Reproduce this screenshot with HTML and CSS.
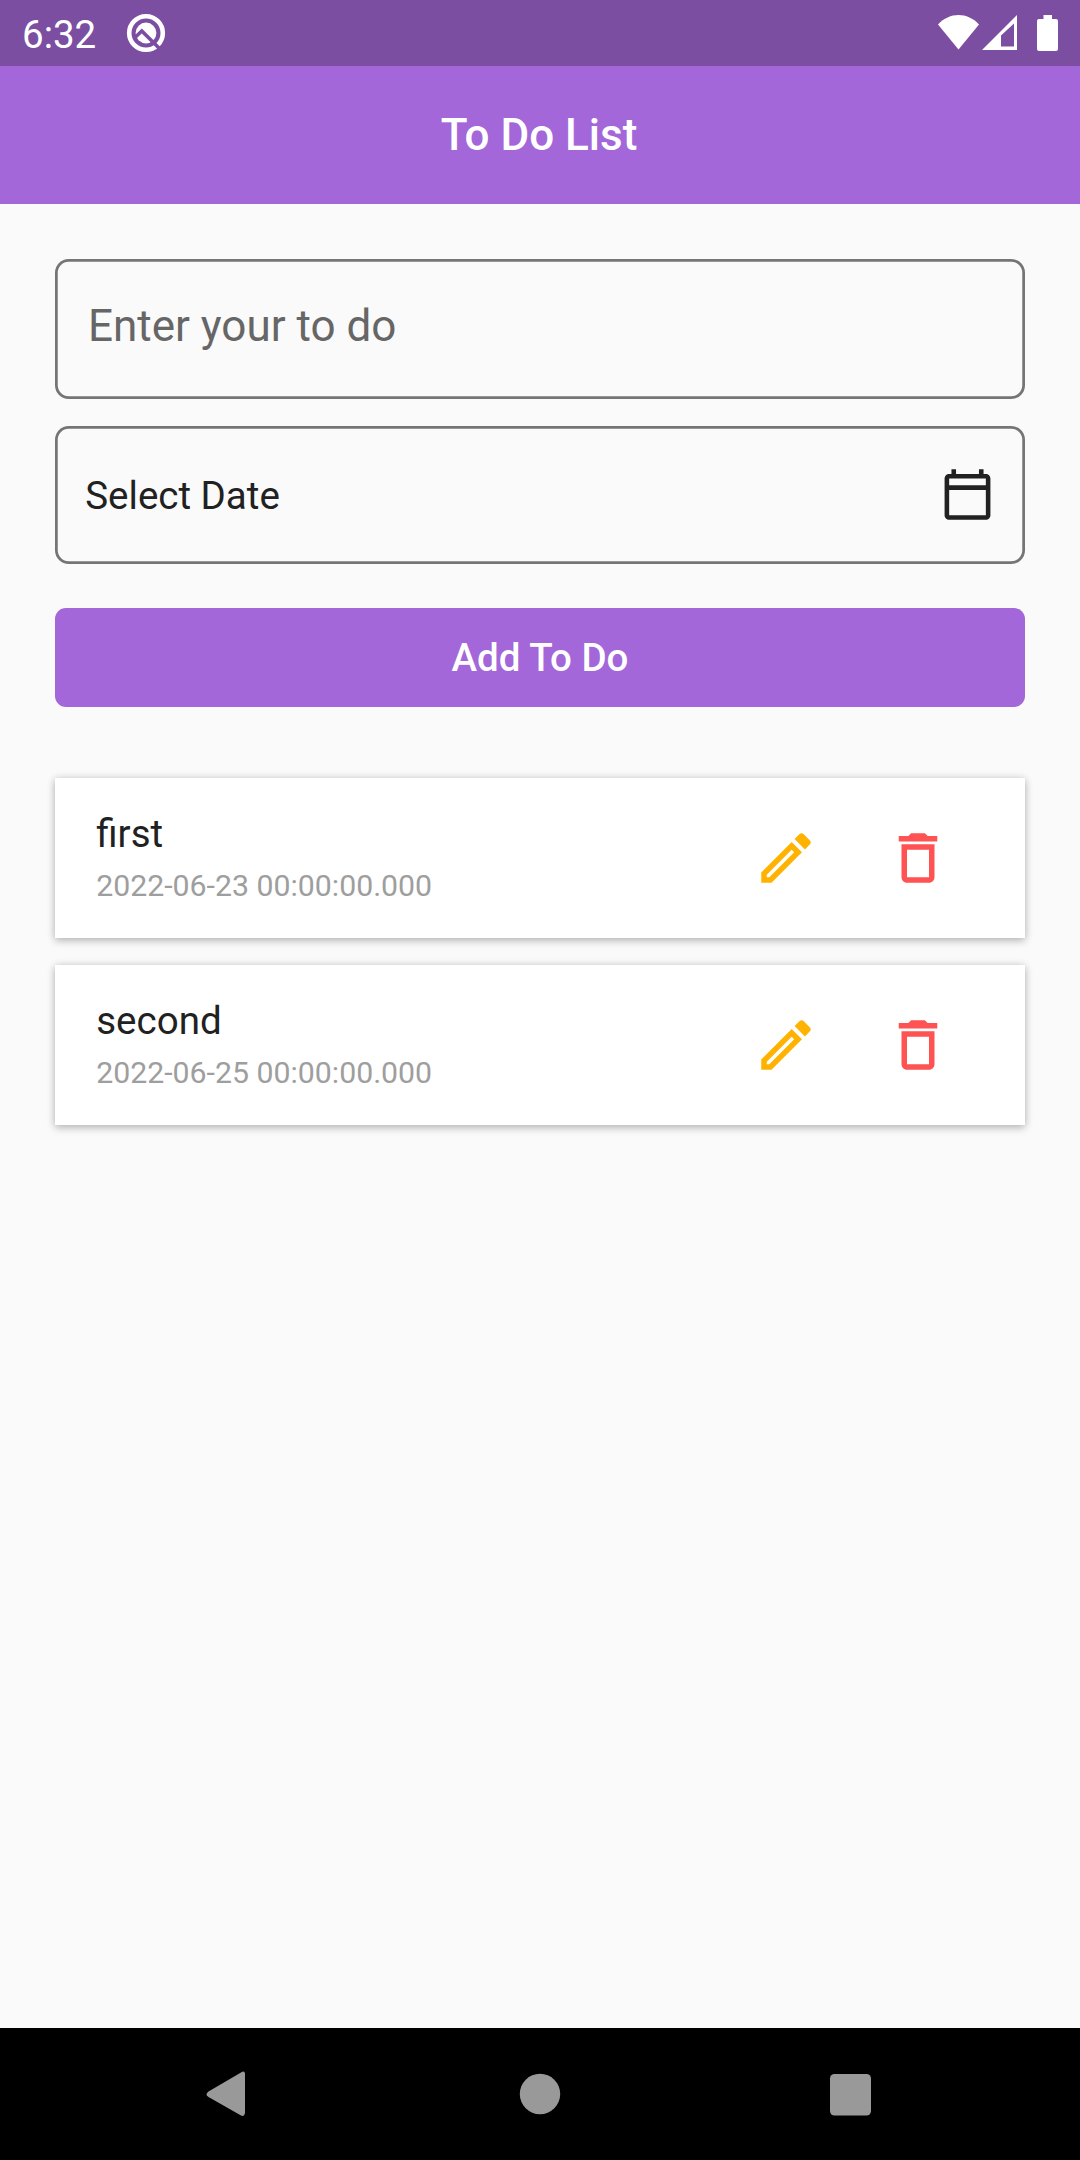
FILE: index.html
```html
<!DOCTYPE html>
<html lang="en">
<head>
<meta charset="utf-8">
<title>To Do List</title>
<link rel="stylesheet" href="styles.css">
</head>
<body>
<div class="screen">
  <header class="status-bar">
    <span class="clock">6:32</span>
    <svg class="badge-icon" width="40" height="40" viewBox="0 0 40 40">
      <circle cx="20" cy="20" r="16.8" fill="none" stroke="#fff" stroke-width="4.6"/>
      <circle cx="20" cy="20" r="10.4" fill="#fff"/>
      <path d="M9 24.5 15.8 18 35.5 37.5" fill="none" stroke="#7c4ea2" stroke-width="3.6"/>
    </svg>
    <svg class="system-icons" width="122" height="40" viewBox="0 0 122 40">
      <path d="M0 10.5C11.5-2.2 29.500-2.200 41 10.500L20.500 35.500Z" fill="#fff"/>
      <path fill-rule="evenodd" d="M44 36 79 1V36ZM63 21.500V32.500H76V9.500Z" fill="#fff"/>
      <path d="M105.500 1H114V5H118Q120 5 120 7V35Q120 37 118 37H101Q99 37 99 35V7Q99 5 101 5H105.500Z" fill="#fff"/>
    </svg>
  </header>
  <div class="app-bar"><h1 class="title">To Do List</h1></div>
  <main class="content">
    <div class="field field-text"><span class="hint">Enter your to do</span></div>
    <div class="field field-date">
      <span class="label">Select Date</span>
      <svg class="calendar" viewBox="0 0 24 24"><path d="M20 3h-1V1h-2v2H7V1H5v2H4c-1.100 0-2 .9-2 2v16c0 1.100.9 2 2 2h16c1.100 0 2-.9 2-2V5c0-1.100-.9-2-2-2zm0 18H4V10h16v11zm0-13H4V5h16v3z"/></svg>
    </div>
    <button class="add">Add To Do</button>
    <ul class="list">
      <li class="card">
        <div class="text"><span class="name">first</span><span class="date">2022-06-23 00:00:00.000</span></div>
        <span class="action edit"><svg viewBox="0 0 24 24"><path d="M14.060 9.020l.92.92L5.920 19H5v-.92l9.060-9.060M17.660 3c-.25 0-.51.1-.7.29l-1.830 1.830 3.750 3.750 1.830-1.830c.39-.39.39-1.020 0-1.410l-2.340-2.340c-.2-.2-.45-.29-.71-.29zm-3.600 3.190L3 17.250V21h3.750L17.810 9.940l-3.750-3.750z"/></svg></span>
        <span class="action delete"><svg viewBox="0 0 24 24"><path d="M16 9v10H8V9h8m-1.500-6h-5l-1 1H5v2h14V4h-3.500l-1-1zM18 7H6v12c0 1.100.9 2 2 2h8c1.100 0 2-.9 2-2V7z"/></svg></span>
      </li>
      <li class="card">
        <div class="text"><span class="name">second</span><span class="date">2022-06-25 00:00:00.000</span></div>
        <span class="action edit"><svg viewBox="0 0 24 24"><path d="M14.060 9.020l.92.92L5.920 19H5v-.92l9.060-9.060M17.660 3c-.25 0-.51.1-.7.29l-1.830 1.830 3.750 3.750 1.830-1.830c.39-.39.39-1.020 0-1.410l-2.340-2.340c-.2-.2-.45-.29-.71-.29zm-3.600 3.190L3 17.250V21h3.750L17.810 9.940l-3.750-3.750z"/></svg></span>
        <span class="action delete"><svg viewBox="0 0 24 24"><path d="M16 9v10H8V9h8m-1.500-6h-5l-1 1H5v2h14V4h-3.500l-1-1zM18 7H6v12c0 1.100.9 2 2 2h8c1.100 0 2-.9 2-2V7z"/></svg></span>
      </li>
    </ul>
  </main>
  <nav class="nav-bar">
    <svg viewBox="0 0 48 48"><path d="M40 3.500V42.500Q39.500 47 36 45.500L3.500 27Q-.5 24.500 3.500 21.500L36 2.500Q39.500 0 40 3.500Z"/></svg>
    <svg viewBox="0 0 48 48"><circle cx="24" cy="24" r="20.200"/></svg>
    <svg viewBox="0 0 48 48"><rect x="3" y="4" width="41" height="41.500" rx="4.500"/></svg>
  </nav>
</div>
</body>
</html>
```
FILE: styles.css
```css
* { box-sizing: border-box; }

body {
  margin: 0;
  font-family: Roboto, "Liberation Sans", sans-serif;
  color: #212121;
  background: #fafafa;
}

.screen {
  display: flex;
  flex-direction: column;
  width: 1080px;
  height: 2160px;
}

.status-bar {
  display: flex;
  align-items: flex-start;
  height: 66px;
  padding: 13px 24px 0 22px;
  background: #7c4ea2;
}

.clock {
  width: 104px;
  color: #fff;
  font-size: 38.500px;
  line-height: 44px;
}

.badge-icon { display: block; }

.system-icons {
  display: block;
  margin: 1px -4px 0 auto;
}

.app-bar {
  display: flex;
  align-items: center;
  justify-content: center;
  height: 137.500px;
  padding-right: 2px;
  background: #a367d9;
}

.title {
  margin: 0;
  color: #fff;
  font-size: 44px;
  font-weight: 500;
  line-height: 52px;
}

.content {
  display: flex;
  flex: 1;
  flex-direction: column;
  padding: 55px 55px 0;
}

.field {
  display: flex;
  align-items: center;
  border-radius: 13.750px;
  box-shadow: inset 0 0 0 2.750px #757575;
}

.field-text {
  height: 140.250px;
  padding: 0 33px 6px;
}

.hint {
  color: #666;
  font-size: 44px;
  line-height: 52px;
}

.field-date {
  justify-content: space-between;
  height: 137.500px;
  margin-top: 27.500px;
  padding: 0 30.250px;
}

.label {
  font-size: 38.500px;
}

.calendar {
  width: 55px;
  height: 55px;
  margin-bottom: 2px;
  fill: #212121;
}

.add {
  height: 99px;
  margin-top: 44px;
  padding: 2px 0 0;
  border: 0;
  border-radius: 11px;
  color: #fff;
  font: 500 38.500px/46px Roboto, sans-serif;
  background: #a367d9;
}

.list {
  display: flex;
  flex-direction: column;
  gap: 27.500px;
  margin: 71.250px 0 0;
  padding: 0;
  list-style: none;
}

.card {
  display: flex;
  align-items: center;
  height: 159.500px;
  padding: 0 41.250px;
  background: #fff;
  box-shadow: 0 3px 8px rgba(0, 0, 0, 0.22), 0 0 8px rgba(0, 0, 0, 0.12);
}

.text {
  display: flex;
  flex: 1;
  flex-direction: column;
  gap: 12px;
  padding-bottom: 1px;
}

.name {
  font-size: 38.500px;
  line-height: 45px;
}

.date {
  color: #9e9e9e;
  font-size: 30.250px;
  line-height: 35px;
}

.action {
  display: flex;
  align-items: center;
  justify-content: center;
  width: 132px;
  height: 132px;
}

.action svg {
  width: 66px;
  height: 66px;
}

.edit { fill: #ffb300; }
.delete { fill: #ff5252; }

.nav-bar {
  display: flex;
  align-items: center;
  justify-content: space-between;
  height: 132px;
  padding: 0 205px;
  background: #000;
}

.nav-bar svg {
  width: 48px;
  height: 48px;
  fill: #999;
}
```
